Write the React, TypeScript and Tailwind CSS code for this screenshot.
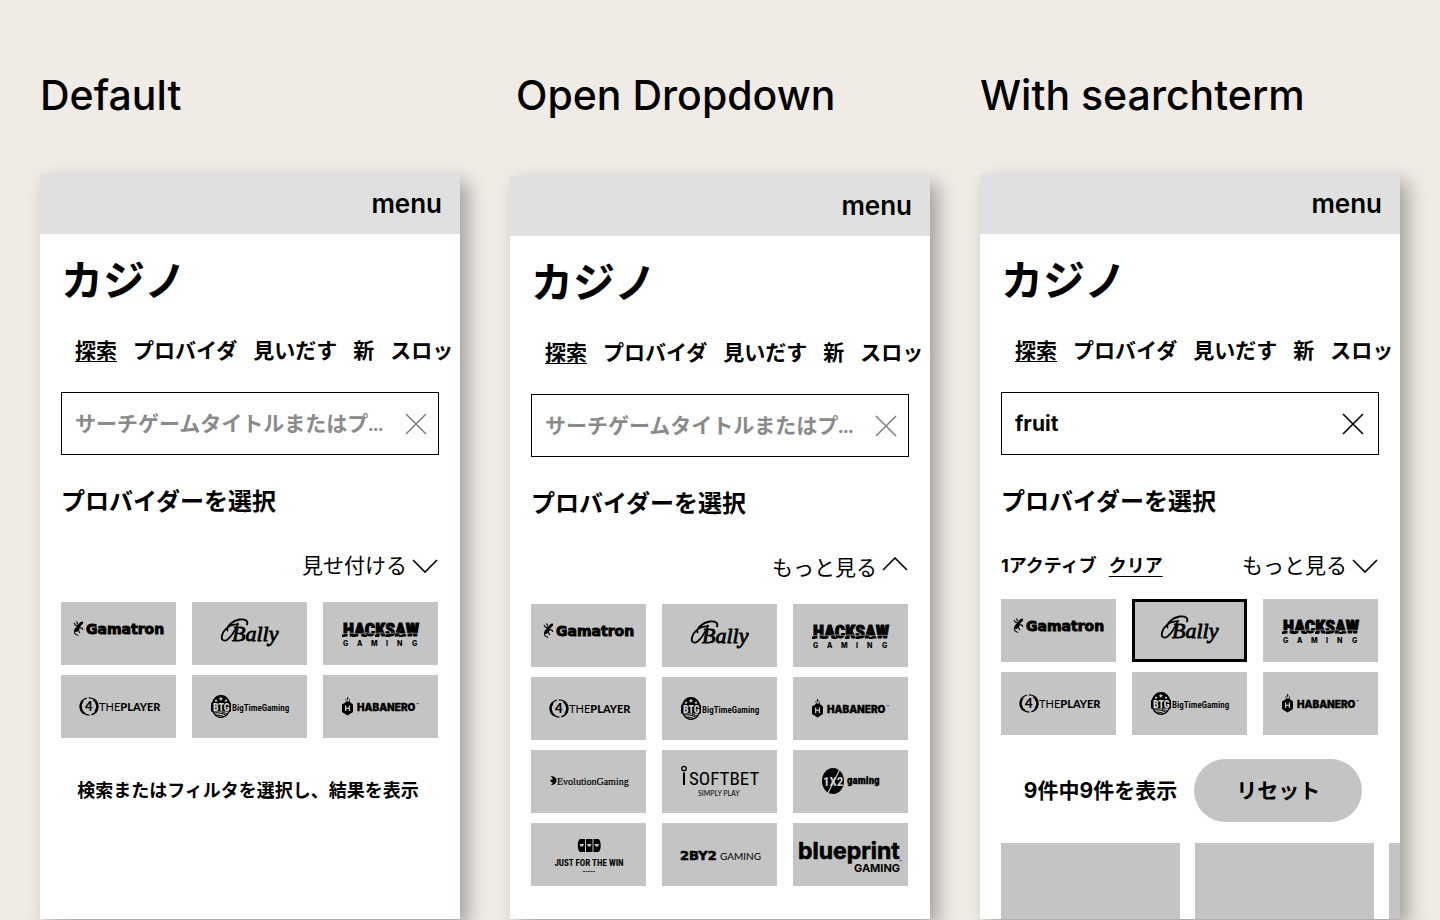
import { useState } from "react";
import type { ReactNode } from "react";

const NARROW = '"Roboto Condensed", "Liberation Sans Narrow", "DejaVu Sans Condensed", sans-serif';
const LATO = 'Lato, sans-serif';
const INTER = 'Inter, sans-serif';

function Logo({ children }: { children: ReactNode }) {
  return (
    <svg width="115" height="63" viewBox="0 0 115 63" className="block shrink-0" fill="#000">
      {children}
    </svg>
  );
}

function Gamatron() {
  return (
    <Logo>
      <path d="M21.500 19.500c1 .6 1 1.800-.2 2.800-1.600 1.300-2.300 2.800-2.800 4.500-.5 1.800-1.800 3-3.500 3.200-1.400.2-2.200-.8-1.700-2.300.6-1.900 2.200-2.600 3.200-4.200 1.100-1.800 3-4.500 5-4z" />
      <path
        d="M14 28.500c-1.200 2-.6 4 2.800 4.800M17 23.800l-2.600-.6-1.200-1.900M16.500 22l-.8-2.300M18.800 25.800l2 .3 1 1.300M17.500 28.500l1.200 2.200"
        fill="none"
        stroke="#000"
        strokeWidth="1.100"
        strokeLinecap="round"
      />
      <text x="25" y="32" fontSize="14" fontWeight="700" stroke="#000" strokeWidth=".9" fontFamily='"DejaVu Sans", sans-serif'>Gamatron</text>
    </Logo>
  );
}

function Bally() {
  return (
    <Logo>
      <path
        d="M35.500 28.500c-1.500-4 5-10 12-11 6-.8 9 1.500 7.500 5M46 22.500c-8-1.500-14.500 5.500-16 11-1.200 4.500 2 6.500 5.500 4 4-3 7.500-9 10.500-16"
        fill="none"
        stroke="#000"
        strokeWidth="1.800"
        strokeLinecap="round"
      />
      <text x="40" y="39" fontSize="22" fontStyle="italic" fontWeight="400" stroke="#000" strokeWidth=".8" fontFamily='"Liberation Serif", serif'>Bally</text>
    </Logo>
  );
}

function Hacksaw() {
  return (
    <Logo>
      <text x="20" y="34" fontSize="18" fontWeight="900" stroke="#000" strokeWidth=".9" fontFamily={NARROW}>HACKSAW</text>
      <path d="M19 31.800l10-.8 6 .8 8-1 7 1 8-1 7 1 8-1 8 1 8-.8 6 .6" fill="none" stroke="#c4c4c4" strokeWidth=".6" />
      <path d="M19 32.500h3v2.500h-3zM29 32.500h4v2.500h-4zM40 33h4v2h-4zM52 33h4v2h-4zM63 33h4v2h-4zM76 33h4v2h-4z" />
      <text x="20 34 48 63 74 89" y="44" fontSize="7" fontWeight="800" fontFamily={INTER}>GAMING</text>
    </Logo>
  );
}

function ThePlayer() {
  return (
    <Logo>
      <circle cx="28" cy="31.500" r="8.600" fill="none" stroke="#000" strokeWidth="1.400" strokeDasharray="11 2 25 2" />
      <path d="M21.500 24.500a9.500 9.500 0 0 0 .5 14.500l2.200-1.200a7.500 7.500 0 0 1-1.700-11zM34.500 38.500a9.500 9.500 0 0 0-.5-14.500l-2.200 1.200a7.500 7.500 0 0 1 1.700 11z" />
      <text x="24" y="36" fontSize="13" fontWeight="900" fontFamily={LATO}>4</text>
      <text x="38" y="36" fontSize="11" fontFamily={LATO}>
        <tspan fontWeight="400">THE</tspan>
        <tspan fontWeight="900">PLAYER</tspan>
      </text>
    </Logo>
  );
}

function BigTime() {
  return (
    <Logo>
      <ellipse cx="29" cy="31.500" rx="9.300" ry="10.800" fill="none" stroke="#000" strokeWidth="1.200" />
      <path d="M20.500 28c.8-5 4.500-7.500 8.500-7.500s7.700 2.500 8.500 7.500z" />
      <path d="M28.900 21.500l.7 1.400 1.500.2-1.100 1 .3 1.500-1.400-.7-1.300.7.200-1.500-1.100-1 1.500-.2zM24 24l.5 1 1.100.2-.8.800.2 1.100-1-.5-1 .5.200-1.100-.8-.8 1.100-.2zM34 24l.5 1 1.100.2-.8.800.2 1.100-1-.5-1 .5.200-1.100-.8-.8 1.100-.2z" fill="#c4c4c4" />
      <path d="M19 28h20v8.500H19z" />
      <path d="M21.500 38c5-.8 9.500.2 13 2.700M23.500 40.200c3.500-.3 6 .3 8.500 1.500M30 37.500c2.500.3 4.500 1 6 2" fill="none" stroke="#000" strokeWidth="1" />
      <text x="21" y="36" fontSize="10" fontWeight="800" fontFamily={NARROW} fill="#d6d6d6">BTG</text>
      <text x="40" y="36" fontSize="9" fontWeight="600" fontFamily={NARROW}>BigTimeGaming</text>
    </Logo>
  );
}

function Habanero() {
  return (
    <Logo>
      <path d="M19 29.500l3.300-2 1.200-1.500 1.500.8 1.400-.8 1 1.500 2.600 2v7.500l-5.500 3.600-5.500-3.600z" />
      <path d="M24.500 21.500l1 1.700-.7 2-1-1.500zM22.800 24l.8.900-.5 1-.8-.8zM26.300 24l.7.900-.6 1-.6-.9z" />
      <path d="M22.600 30.500v5.500M26.400 30.500v5.500M22.600 33.300h3.800" stroke="#c4c4c4" strokeWidth="1.300" />
      <text x="34" y="36" fontSize="10" fontWeight="900" stroke="#000" strokeWidth=".3" fontFamily={INTER}>HABANERO</text>
      <text x="93" y="32" fontSize="5" fontFamily={INTER}>™</text>
    </Logo>
  );
}

function Evolution() {
  return (
    <Logo>
      <path d="M19.500 26c4 0 6 2.200 6 4.600s-2 4.600-6 4.600c1.500-1 2-2 2.200-3l-2.200-.5v-2l2.200-.5c-.2-1.200-.7-2.200-2.200-3.200z" />
      <text x="26" y="35" fontSize="10" stroke="#000" strokeWidth=".2" fontFamily='"Liberation Serif", serif'>EvolutionGaming</text>
    </Logo>
  );
}

function ISoftBet() {
  return (
    <Logo>
      <circle cx="22" cy="18.500" r="2.200" fill="none" stroke="#000" strokeWidth="1.300" />
      <path d="M22 22.500V35" stroke="#000" strokeWidth="2" />
      <text x="27" y="35" fontSize="19" fontFamily={NARROW}>SOFTBET</text>
      <text x="36" y="46" fontSize="7" fontFamily={LATO}>SIMPLY PLAY</text>
    </Logo>
  );
}

function OneXTwo() {
  return (
    <Logo>
      <ellipse cx="40" cy="31" rx="11" ry="13" />
      <path d="M35 43L47 19" stroke="#c4c4c4" strokeWidth="1.200" />
      <text x="30" y="36" fontSize="13" fontWeight="700" fontFamily={NARROW} fill="#d0d0d0">1X2</text>
      <text x="54" y="34" fontSize="11" fontWeight="800" stroke="#000" strokeWidth=".3" fontFamily={NARROW}>gaming</text>
    </Logo>
  );
}

function JustForTheWin() {
  return (
    <Logo>
      <path d="M49 16h5v13h-5c-1.500-1-2.200-3.500-2.200-6.500S47.500 17 49 16zM55 16h6.500v13H55zM62.500 16h5c1.500 1 2.200 3.500 2.200 6.500S69 28 67.500 29h-5z" />
      <path d="M48.500 21h4.500l-1 2.500h-2.500zM56 21h4.500l-1 2.500H57zM63.500 21H68l-1 2.500h-2.500z" fill="#c4c4c4" />
      <text x="58" y="43" textAnchor="middle" fontSize="9" fontWeight="700" fontFamily={NARROW}>JUST FOR THE WIN</text>
      <path d="M52 48.500h12" stroke="#333" strokeWidth="1" strokeDasharray="2 .5" />
    </Logo>
  );
}

function TwoByTwo() {
  return (
    <Logo>
      <text x="18" y="37" fontSize="13" fontWeight="900" stroke="#000" strokeWidth=".6" fontFamily='"DejaVu Sans", sans-serif'>2BY2</text>
      <text x="58" y="37" fontSize="10" fontFamily={LATO}>GAMING</text>
    </Logo>
  );
}

function Blueprint() {
  return (
    <Logo>
      <text x="5" y="36" fontSize="23" fontWeight="700" stroke="#000" strokeWidth=".6" fontFamily={INTER}>blueprint</text>
      <text x="61" y="49" fontSize="11" fontWeight="700" fontFamily={INTER}>GAMING</text>
      <text x="106" y="41" fontSize="5" fontFamily={INTER}>™</text>
    </Logo>
  );
}

const BASE_PROVIDERS = [
  { name: "Gamatron", Mark: Gamatron },
  { name: "Bally", Mark: Bally },
  { name: "Hacksaw Gaming", Mark: Hacksaw },
  { name: "4ThePlayer", Mark: ThePlayer },
  { name: "Big Time Gaming", Mark: BigTime },
  { name: "Habanero", Mark: Habanero },
];

const ALL_PROVIDERS = [
  ...BASE_PROVIDERS,
  { name: "Evolution Gaming", Mark: Evolution },
  { name: "iSoftBet", Mark: ISoftBet },
  { name: "1X2 Gaming", Mark: OneXTwo },
  { name: "Just For The Win", Mark: JustForTheWin },
  { name: "2BY2 Gaming", Mark: TwoByTwo },
  { name: "Blueprint Gaming", Mark: Blueprint },
];

const TABS = ["探索", "プロバイダ", "見いだす", "新", "スロット"];

function CloseIcon() {
  return (
    <svg width="22" height="22" viewBox="0 0 22 22" fill="none" stroke="currentColor" strokeWidth="1.600" className="block">
      <path d="M1 1l20 20M21 1L1 21" />
    </svg>
  );
}

function Chevron({ up }: { up?: boolean }) {
  return (
    <svg width="26" height="22" viewBox="0 0 26 22" fill="none" stroke="currentColor" strokeWidth="1.600" className="block">
      <path d={up ? "M1 13L13 1l12 12" : "M1 5l12 12L25 5"} />
    </svg>
  );
}

function SearchBox({ id, initial }: { id: string; initial: string }) {
  const [term, setTerm] = useState(initial);
  const filled = term !== "";
  return (
    <div className="mx-[21px] mt-[25px] flex h-[63px] items-center border border-black">
      <input
        id={id}
        type="text"
        aria-label="検索"
        value={term}
        onChange={(e) => setTerm(e.target.value)}
        placeholder="サーチゲームタイトルまたはプ..."
        className="h-full min-w-0 flex-1 bg-transparent pl-[13px] text-[21px] font-bold text-black outline-none placeholder:font-['Lato','Noto_Sans_CJK_JP',sans-serif] placeholder:text-[#8a8a8a] placeholder:opacity-100"
      />
      <button
        type="button"
        aria-label="消去"
        onClick={() => setTerm("")}
        className={filled ? "mr-3.5 text-black" : "mr-[11px] text-[#808080]"}
      >
        <CloseIcon />
      </button>
    </div>
  );
}

function ProviderGrid({ all, selected }: { all?: boolean; selected?: string }) {
  const list = all ? ALL_PROVIDERS : BASE_PROVIDERS;
  return (
    <div className="grid grid-cols-3 gap-x-4 gap-y-2.5 pr-[22px] pl-[21px]">
      {list.map(({ name, Mark }) => (
        <button
          key={name}
          type="button"
          aria-label={name}
          aria-pressed={name === selected}
          className={
            name === selected
              ? "flex h-[63px] items-center justify-center overflow-hidden bg-[#c4c4c4] outline-3 -outline-offset-3 outline-black"
              : "flex h-[63px] items-center justify-center overflow-hidden bg-[#c4c4c4]"
          }
        >
          <Mark />
        </button>
      ))}
    </div>
  );
}

function Phone({
  title,
  titleClass,
  panelClass,
  id,
  term,
  toggle,
  open,
  active,
  children,
}: {
  title: string;
  titleClass: string;
  panelClass: string;
  id: string;
  term: string;
  toggle: string;
  open?: boolean;
  active?: boolean;
  children: ReactNode;
}) {
  return (
    <section className="flex min-w-0 flex-col">
      <h2 className={`h-[174px] pt-[65px] text-[41px] leading-[60px] font-medium whitespace-nowrap ${titleClass}`}>{title}</h2>
      <div className={`flex flex-1 flex-col overflow-hidden bg-white shadow-[8px_8px_18px_rgba(0,0,0,0.32)] ${panelClass}`}>
        <header className="flex h-[60px] items-center justify-end bg-[#e0e0e0] pr-[18px]">
          <button type="button" className="text-[26px] leading-8 font-semibold">menu</button>
        </header>
        <h1 className="mt-[17px] px-[21px] text-[42px] leading-[60px] font-bold">カジノ</h1>
        <nav className="mt-6 mr-px flex h-8 gap-4 overflow-hidden pl-[35px] text-[21px] leading-8 font-bold whitespace-nowrap">
          {TABS.map((tab, i) => (
            <a key={tab} href="#" className={i === 0 ? "shrink-0 underline decoration-1 underline-offset-3" : "shrink-0"}>
              {tab}
            </a>
          ))}
        </nav>
        <SearchBox id={id} initial={term} />
        <h3 className="mt-[31px] px-[21px] text-[24px] leading-8 font-bold">プロバイダーを選択</h3>
        <div className="mt-8 flex h-8 items-center gap-3 pr-[22px] pl-[21px]">
          {active && (
            <>
              <span className="text-[18px] leading-8 font-bold">1アクティブ</span>
              <button type="button" className="text-[18px] leading-8 font-bold underline decoration-1 underline-offset-4">
                クリア
              </button>
            </>
          )}
          <button type="button" aria-expanded={open} className="ml-auto flex items-center gap-[5px] text-[21px] leading-8">
            {toggle}
            <Chevron up={open} />
          </button>
        </div>
        {children}
      </div>
    </section>
  );
}

export default function App() {
  return (
    <main
      lang="ja"
      className="grid min-h-screen grid-cols-3 gap-[50px] overflow-hidden bg-[#f0ebe5] px-10 pb-px font-['Inter','Noto_Sans_CJK_JP',sans-serif] text-black"
    >
      <Phone title="Default" titleClass="" panelClass="" id="search-default" term="" toggle="見せ付ける">
        <div className="mt-5">
          <ProviderGrid />
        </div>
        <p className="mt-[37px] pr-1 text-center text-[18px] leading-8 font-bold">検索またはフィルタを選択し、結果を表示</p>
      </Phone>

      <Phone title="Open Dropdown" titleClass="pl-1.5" panelClass="mt-0.5" id="search-open" term="" toggle="もっと見る" open>
        <div className="mt-5">
          <ProviderGrid all />
        </div>
      </Phone>

      <Phone title="With searchterm" titleClass="" panelClass="" id="search-term" term="fruit" toggle="もっと見る" active>
        <div className="mt-[17px]">
          <ProviderGrid selected="Bally" />
        </div>
        <div className="mt-6 flex items-center justify-center gap-[17px] pl-1.5">
          <p className="text-[21px] leading-8 font-bold">9件中9件を表示</p>
          <button type="button" className="h-[63px] w-[168px] rounded-full bg-[#c4c4c4] text-[21px] font-bold">
            リセット
          </button>
        </div>
        <div className="mt-[21px] flex min-h-[76px] flex-1 gap-[15px] pl-[21px]">
          <div className="w-[179px] shrink-0 bg-[#c4c4c4]" />
          <div className="w-[179px] shrink-0 bg-[#c4c4c4]" />
          <div className="w-[179px] shrink-0 bg-[#c4c4c4]" />
        </div>
      </Phone>
    </main>
  );
}
